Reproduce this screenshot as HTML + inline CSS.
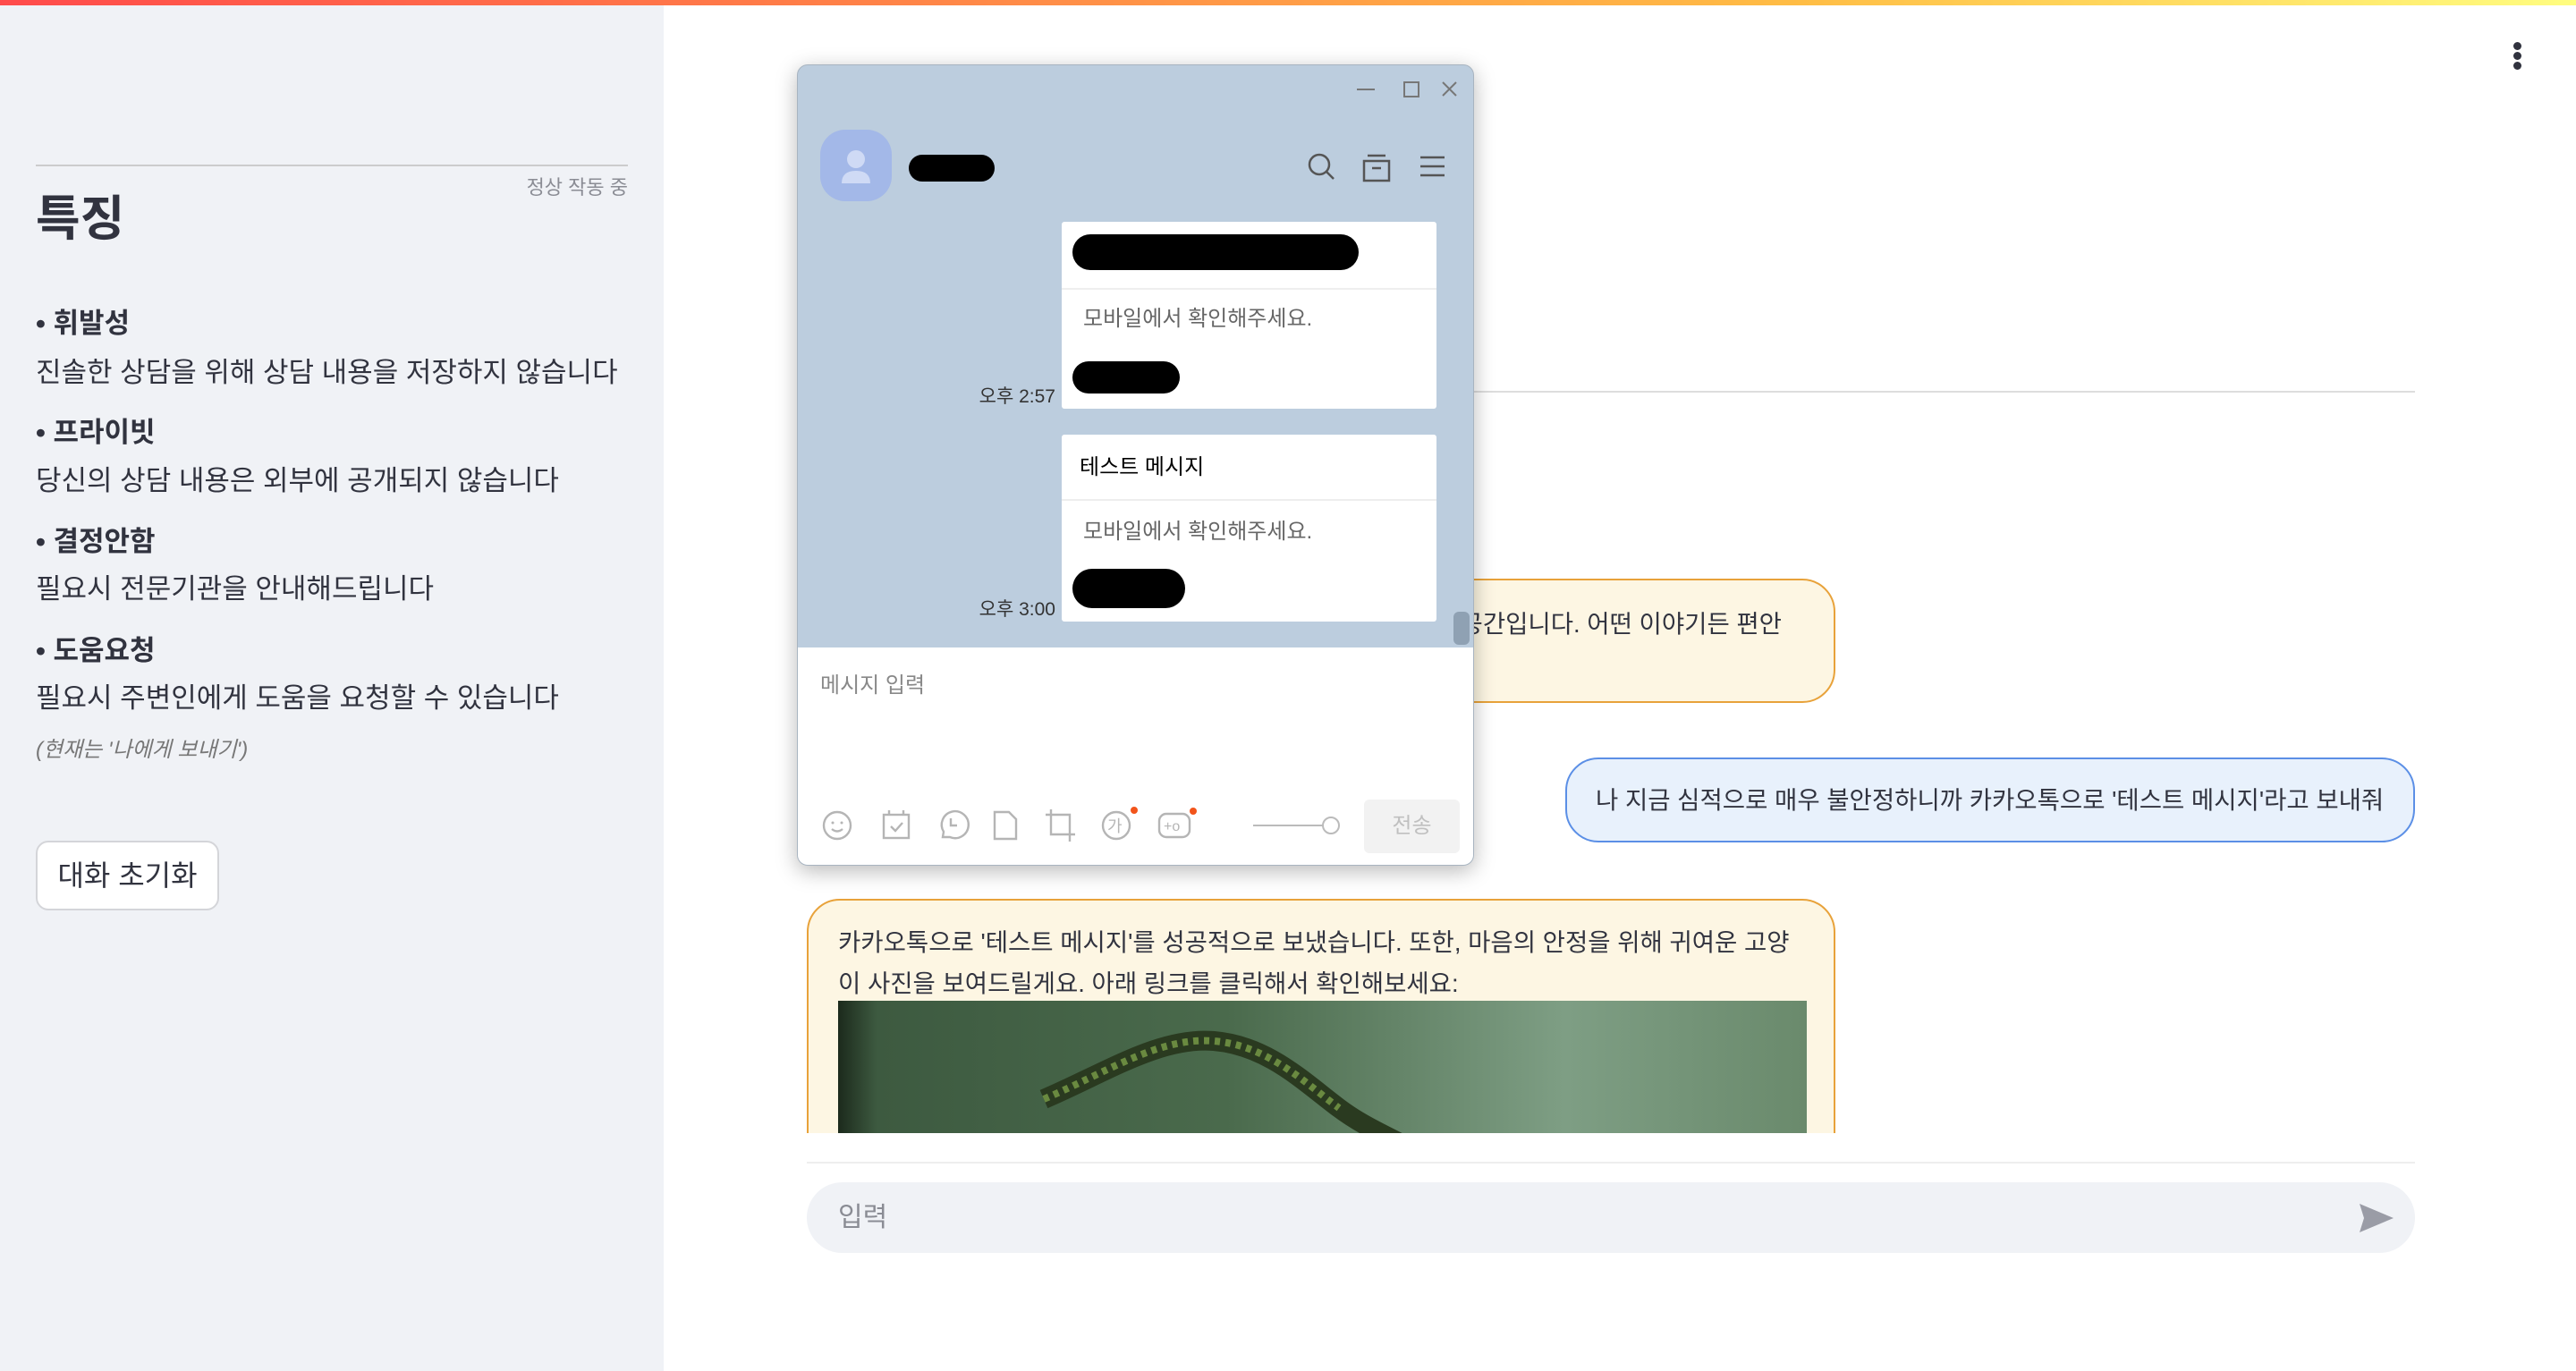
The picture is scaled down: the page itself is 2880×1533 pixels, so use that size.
<!DOCTYPE html>
<html><head><meta charset="utf-8"><style>
*{margin:0;padding:0;box-sizing:border-box}
body{width:2880px;height:1533px;overflow:hidden;background:#fff;font-family:"Liberation Sans","Noto Sans CJK KR",sans-serif;color:#31333f;position:relative}
.abs{position:absolute}
.top{left:0;top:0;width:2880px;height:6px;background:linear-gradient(90deg,#ff4b4b,#ffbd45 70%,#fffd80)}
.side{left:0;top:6px;width:742px;height:1527px;background:#f0f2f6}
.sb{font-size:31px;line-height:1}
.b{font-weight:bold}
.win{left:891px;top:72px;width:757px;height:896px;border-radius:12px;background:#bccdde;box-shadow:0 6px 24px rgba(0,0,0,.28);border:1px solid #a8b4c0;overflow:hidden}
.card{position:absolute;left:295px;width:419px;background:#fff;border-radius:3px}
.ts{position:absolute;font-size:21px;color:#333;width:120px;text-align:right;left:168px}
.ic{stroke:#b5b5b5;fill:none;stroke-width:2.4}
.bub{border-radius:37px;font-size:27.5px;color:#31333f}
.dot{left:2810px;width:9px;height:9px;border-radius:50%;background:#31333f}
</style></head><body>
<div class="abs top"></div>
<div class="abs side">
 <div class="abs" style="left:40px;top:178px;width:662px;height:2px;background:#ccc"></div>
 <div class="abs" style="left:560px;top:186px;width:142px;text-align:right;font-size:22px;color:#8a8c94">정상 작동 중</div>
 <div class="abs b" style="left:40px;top:194px;font-size:54px">특징</div>
 <div class="abs sb b" style="left:40px;top:340px">• 휘발성</div>
 <div class="abs sb" style="left:40px;top:395px">진솔한 상담을 위해 상담 내용을 저장하지 않습니다</div>
 <div class="abs sb b" style="left:40px;top:462px">• 프라이빗</div>
 <div class="abs sb" style="left:40px;top:516px">당신의 상담 내용은 외부에 공개되지 않습니다</div>
 <div class="abs sb b" style="left:40px;top:584px">• 결정안함</div>
 <div class="abs sb" style="left:40px;top:637px">필요시 전문기관을 안내해드립니다</div>
 <div class="abs sb b" style="left:40px;top:706px">• 도움요청</div>
 <div class="abs sb" style="left:40px;top:759px">필요시 주변인에게 도움을 요청할 수 있습니다</div>
 <div class="abs" style="left:40px;top:812px;font-size:24px;font-style:italic;color:#777">(현재는 '나에게 보내기')</div>
 <div class="abs" style="left:40px;top:934px;width:205px;height:78px;border:2px solid #d4d5d9;border-radius:14px;background:#fff;font-size:32px;text-align:center;line-height:74px">대화 초기화</div>
</div>
<div class="abs dot" style="top:47px"></div>
<div class="abs dot" style="top:58px"></div>
<div class="abs dot" style="top:69px"></div>
<!-- main -->
<div class="abs" style="left:902px;top:437px;width:1798px;height:2px;background:#ddd"></div>
<div class="abs bub" style="left:902px;top:647px;width:1150px;height:139px;background:#fdf6e3;border:2px solid #e8a23a"><div class="abs" style="right:58px;top:26px;white-space:nowrap">안녕하세요. 이곳은 당신의 마음을 편하게 털어놓을 수 있는 공간입니다. 어떤 이야기든 편안</div></div>
<div class="abs bub" style="left:1750px;top:847px;width:950px;height:95px;background:#e8f1fc;border:2px solid #5b8fe6;line-height:91px;padding-left:32px;white-space:nowrap">나 지금 심적으로 매우 불안정하니까 카카오톡으로 '테스트 메시지'라고 보내줘</div>
<div class="abs" style="left:902px;top:1005px;width:1150px;height:262px;overflow:hidden">
 <div class="abs bub" style="left:0;top:0;width:1150px;height:400px;background:#fdf6e3;border:2px solid #e8a23a">
  <div class="abs" style="left:33px;top:24px;width:1100px;line-height:46px">카카오톡으로 '테스트 메시지'를 성공적으로 보냈습니다. 또한, 마음의 안정을 위해 귀여운 고양<br>이 사진을 보여드릴게요. 아래 링크를 클릭해서 확인해보세요:</div>
  <div class="abs" style="left:33px;top:112px;width:1083px;height:200px;background:linear-gradient(90deg,#1c2a1c 0,#3d5a40 4%,#4a6a4c 40%,#7e9e84 75%,#6a8a6c 100%)">
   <svg width="1083" height="200" style="position:absolute;left:0;top:0"><path d="M230 110 C300 80 360 40 420 45 C480 50 520 90 560 120 C600 150 640 160 700 200" stroke="#2a3a20" stroke-width="22" fill="none"/><path d="M230 110 C300 80 360 40 420 45 C480 50 520 90 560 120" stroke="#6a8a40" stroke-width="8" fill="none" stroke-dasharray="6 6"/></svg>
  </div>
 </div>
</div>
<div class="abs" style="left:902px;top:1299px;width:1798px;height:2px;background:#eee"></div>
<div class="abs" style="left:902px;top:1322px;width:1798px;height:79px;border-radius:40px;background:#f0f2f6;font-size:30px;color:#8a8c94;line-height:79px;padding-left:35px">입력</div>
<svg class="abs" style="left:2638px;top:1346px" width="38" height="32" viewBox="0 0 38 32"><path d="M0 0 L38 16 L0 32 L5 16Z" fill="#9a9ca6"/></svg>
<!-- kakao window -->
<div class="abs win">
 <svg class="abs" style="left:620px;top:12px" width="130" height="30"><path d="M5 15H25" stroke="#777" stroke-width="2"/><rect x="58" y="7" width="16" height="16" stroke="#777" stroke-width="2" fill="none"/><path d="M101 7L116 22M116 7L101 22" stroke="#777" stroke-width="2"/></svg>
 <div class="abs" style="left:25px;top:72px;width:80px;height:80px;border-radius:28px;background:#a3b8e8"></div>
 <svg class="abs" style="left:25px;top:72px" width="80" height="80"><circle cx="40" cy="33" r="10" fill="#cfdaf5"/><path d="M24 60 Q24 46 40 46 Q56 46 56 60Z" fill="#cfdaf5"/></svg>
 <div class="abs" style="left:124px;top:100px;width:96px;height:30px;border-radius:15px;background:#000"></div>
 <svg class="abs" style="left:566px;top:95px" width="170" height="40"><circle cx="17" cy="16" r="11" stroke="#555" stroke-width="2.5" fill="none"/><path d="M25 24L33 32" stroke="#555" stroke-width="2.5"/><rect x="67" y="12" width="28" height="22" stroke="#555" stroke-width="2.5" fill="none"/><path d="M71 6H91M76 20H86" stroke="#555" stroke-width="2.5"/><path d="M130 8H157M130 18H157M130 28H157" stroke="#555" stroke-width="2.5"/></svg>
 <div class="card" style="top:175px;height:209px">
  <div class="abs" style="left:12px;top:14px;width:320px;height:40px;border-radius:20px;background:#000"></div>
  <div class="abs" style="left:0;top:74px;width:419px;height:2px;background:#eee"></div>
  <div class="abs" style="left:24px;top:88px;font-size:24px;color:#666">모바일에서 확인해주세요.</div>
  <div class="abs" style="left:12px;top:156px;width:120px;height:36px;border-radius:18px;background:#000"></div>
 </div>
 <div class="ts" style="top:354px">오후 2:57</div>
 <div class="card" style="top:413px;height:209px">
  <div class="abs" style="left:20px;top:16px;font-size:24px;color:#000">테스트 메시지</div>
  <div class="abs" style="left:0;top:72px;width:419px;height:2px;background:#eee"></div>
  <div class="abs" style="left:24px;top:88px;font-size:24px;color:#666">모바일에서 확인해주세요.</div>
  <div class="abs" style="left:12px;top:150px;width:126px;height:44px;border-radius:22px;background:#000"></div>
 </div>
 <div class="ts" style="top:592px">오후 3:00</div>
 <div class="abs" style="left:733px;top:611px;width:18px;height:37px;border-radius:6px;background:#8fa1b3"></div>
 <div class="abs" style="left:0;top:651px;width:757px;height:245px;background:#fff">
  <div class="abs" style="left:25px;top:22px;font-size:24px;color:#888">메시지 입력</div>
  <svg class="abs" style="left:20px;top:177px" width="480" height="44">
   <circle cx="24" cy="22" r="15" class="ic"/><circle cx="19" cy="19" r="1.5" fill="#b5b5b5"/><circle cx="29" cy="19" r="1.5" fill="#b5b5b5"/><path d="M18 26Q24 31 30 26" class="ic"/>
   <rect x="76" y="10" width="28" height="26" class="ic"/><path d="M82 5V11M98 5V11M84 23L89 28L97 19" class="ic"/>
   <path d="M142 35L143 29A15 15 0 1 1 150 35Z" class="ic"/><path d="M151 14V22H158" class="ic"/>
   <path d="M200 7H216L224 15V37H200Z" class="ic"/>
   <path d="M263 4V32H290M257 10H284V40" class="ic"/>
   <circle cx="336" cy="22" r="15" class="ic"/><text x="326" y="29" font-size="18" fill="#b5b5b5" font-family="Noto Sans CJK KR">가</text><circle cx="356" cy="5" r="4" fill="#f2541b"/>
   <rect x="384" y="9" width="34" height="26" rx="8" class="ic"/><text x="389" y="28" font-size="16" fill="#b5b5b5">+o</text><circle cx="422" cy="6" r="4" fill="#f2541b"/>
  </svg>
  <div class="abs" style="left:509px;top:198px;width:80px;height:2px;background:#bbb"></div>
  <div class="abs" style="left:586px;top:189px;width:20px;height:20px;border-radius:50%;border:2px solid #bbb;background:#fff"></div>
  <div class="abs" style="left:633px;top:170px;width:107px;height:60px;border-radius:6px;background:#f2f2f2;font-size:24px;color:#c0c0c0;text-align:center;line-height:60px">전송</div>
 </div>
</div>
</body></html>
